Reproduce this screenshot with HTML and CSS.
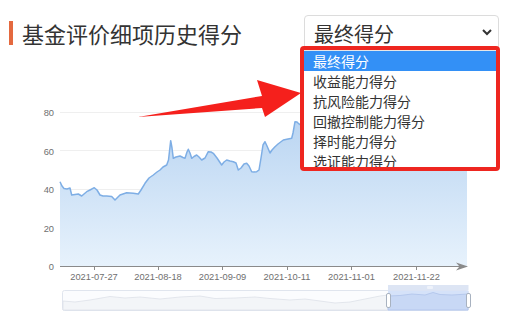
FILE: index.html
```html
<!DOCTYPE html>
<html lang="zh">
<head>
  <meta charset="UTF-8">
  <title>基金评价细项历史得分</title>
  <link rel="stylesheet" href="styles.css">
</head>
<body>
  <div class="page">
    <div class="head">
      <h2 class="title">基金评价细项历史得分</h2>
      <div class="select">
        <span>最终得分</span>
        <svg class="chevron" width="10" height="7" viewBox="0 0 10 7"><path d="M1 1 L5 5 L9 1" fill="none" stroke="#333" stroke-width="2"/></svg>
      </div>
    </div>

    <svg class="chart" width="513" height="266" viewBox="0 60 513 266">
      <defs>
        <linearGradient id="fill" gradientUnits="userSpaceOnUse" x1="0" y1="120" x2="0" y2="266">
          <stop offset="0" stop-color="#bad5f2"/>
          <stop offset="1" stop-color="#e7f2fc"/>
        </linearGradient>
      </defs>

      <!-- grid -->
      <g stroke="#efefef" stroke-width="1">
        <line x1="60" y1="112.5" x2="467" y2="112.5"/>
        <line x1="60" y1="150.5" x2="467" y2="150.5"/>
        <line x1="60" y1="189.5" x2="467" y2="189.5"/>
        <line x1="60" y1="227.5" x2="467" y2="227.5"/>
      </g>
      <g class="ylab" text-anchor="end">
        <text x="54" y="116">80</text>
        <text x="54" y="154.5">60</text>
        <text x="54" y="193">40</text>
        <text x="54" y="231.5">20</text>
        <text x="54" y="269.5">0</text>
      </g>

      <!-- series -->
      <path fill="url(#fill)" d="M60 181.7 L62 186 L64 188.5 L67 189 L70 188 L71.7 195 L75 194.5 L78.3 194 L81.7 196 L84 194 L86.7 191.7 L90 190 L94.3 187.7 L97 190 L100 195 L103 196 L106.7 196 L111.7 196.5 L115 200 L117 198 L120 195 L126.7 192.7 L133.3 193.3 L138.3 194 L141 190 L145 183.3 L149 178 L153.3 175 L157 172 L160 170 L163 167 L166.7 165 L168.5 160 L170.7 140.7 L172 148 L173.3 158.3 L176 157 L180 156 L183 157.5 L185 158.3 L187 152 L188.3 149.3 L190 153 L191.7 158.3 L194 156.5 L196.7 155 L199 157 L201.7 160 L205 158 L208.3 151.7 L211 152 L213.3 153.3 L217 158 L221.7 165 L224 162 L226.7 160 L230 161 L233.3 161.7 L236 163 L238.3 170 L241 168 L244 164 L246.7 163.3 L249 166 L251.7 171.7 L254 172 L256.7 171.7 L259 170 L261 158 L263 145 L265 141.7 L267 146 L270 153 L272 150 L275 146.7 L278 144 L283.3 140 L288 139 L291.7 138.3 L293 133 L295 121.7 L297 122 L298.3 123.3 L305 128 L315 135 L325 130 L340 140 L355 132 L370 138 L385 128 L400 134 L415 126 L430 130 L445 124 L455 128 L467 126 L467 266 L60 266 Z"/>
      <path fill="none" stroke="#7eaee5" stroke-width="1.5" stroke-linejoin="round" d="M60 181.7 L62 186 L64 188.5 L67 189 L70 188 L71.7 195 L75 194.5 L78.3 194 L81.7 196 L84 194 L86.7 191.7 L90 190 L94.3 187.7 L97 190 L100 195 L103 196 L106.7 196 L111.7 196.5 L115 200 L117 198 L120 195 L126.7 192.7 L133.3 193.3 L138.3 194 L141 190 L145 183.3 L149 178 L153.3 175 L157 172 L160 170 L163 167 L166.7 165 L168.5 160 L170.7 140.7 L172 148 L173.3 158.3 L176 157 L180 156 L183 157.5 L185 158.3 L187 152 L188.3 149.3 L190 153 L191.7 158.3 L194 156.5 L196.7 155 L199 157 L201.7 160 L205 158 L208.3 151.7 L211 152 L213.3 153.3 L217 158 L221.7 165 L224 162 L226.7 160 L230 161 L233.3 161.7 L236 163 L238.3 170 L241 168 L244 164 L246.7 163.3 L249 166 L251.7 171.7 L254 172 L256.7 171.7 L259 170 L261 158 L263 145 L265 141.7 L267 146 L270 153 L272 150 L275 146.7 L278 144 L283.3 140 L288 139 L291.7 138.3 L293 133 L295 121.7 L297 122 L298.3 123.3 L305 128 L315 135 L325 130 L340 140 L355 132 L370 138 L385 128 L400 134 L415 126 L430 130 L445 124 L455 128 L467 126"/>

      <!-- x axis -->
      <line x1="60" y1="266.5" x2="462" y2="266.5" stroke="#8a8a8a" stroke-width="1"/>
      <polygon points="468,266.5 456,262.5 459.5,266.5 456,270.5" fill="#8a8a8a"/>
      <g stroke="#8a8a8a" stroke-width="1">
        <line x1="94.5" y1="266" x2="94.5" y2="270"/>
        <line x1="158.5" y1="266" x2="158.5" y2="270"/>
        <line x1="222.5" y1="266" x2="222.5" y2="270"/>
        <line x1="287.5" y1="266" x2="287.5" y2="270"/>
        <line x1="351.5" y1="266" x2="351.5" y2="270"/>
        <line x1="416.5" y1="266" x2="416.5" y2="270"/>
      </g>
      <g class="xlab" text-anchor="middle">
        <text x="94" y="279.5">2021-07-27</text>
        <text x="158" y="279.5">2021-08-18</text>
        <text x="222.5" y="279.5">2021-09-09</text>
        <text x="287" y="279.5">2021-10-11</text>
        <text x="351.5" y="279.5">2021-11-01</text>
        <text x="416.5" y="279.5">2021-11-22</text>
      </g>

      <!-- data zoom -->
      <rect x="62.5" y="290.5" width="406" height="20" rx="2" fill="#fbfcfe" stroke="#e0e5ee"/>
      <path fill="#f3f5f8" stroke="#dde1e8" stroke-width="0.8" d="M63 301 L75 302 L90 300 L110 296.5 L125 298 L140 297 L160 299 L180 297 L200 296 L215 298.5 L235 298 L255 297 L270 298.5 L290 300 L305 299 L320 301 L335 303 L350 302 L365 299 L380 296 L388 295 L388 310 L63 310 Z"/>
      <rect x="388" y="290.5" width="80.5" height="20" fill="#d5e2f9"/>
      <path fill="#c8d8f5" stroke="#aec3ea" stroke-width="0.8" d="M388 296 L400 295.5 L412 294 L425 295 L433 292.5 L440 294.5 L452 295 L468 294 L468 310 L388 310 Z"/>
      <rect x="388" y="285" width="80.5" height="5" fill="#dde5f4"/>
      <rect x="427" y="286" width="6" height="3" rx="1" fill="#eef2fa"/>
      <rect x="386.5" y="293.5" width="4" height="14" rx="1.5" fill="#fff" stroke="#a8b2c0"/>
      <rect x="466.5" y="293.5" width="4" height="14" rx="1.5" fill="#fff" stroke="#a8b2c0"/>
    </svg>

    <svg class="arrow" width="513" height="326" viewBox="0 0 513 326">
      <polygon points="138,117 262,96 257,80 301,93 265,117 262,108" fill="#f5201c"/>
    </svg>

    <div class="dropdown">
      <ul class="options">
        <li class="active">最终得分</li>
        <li>收益能力得分</li>
        <li>抗风险能力得分</li>
        <li>回撤控制能力得分</li>
        <li>择时能力得分</li>
        <li>选证能力得分</li>
      </ul>
    </div>
  </div>
</body>
</html>
```

FILE: styles.css
```css
* { box-sizing: border-box; margin: 0; padding: 0; }
body {
  font-family: "Noto Sans CJK SC", "Liberation Sans", sans-serif;
  background: #fff;
  color: #333;
}
.page {
  position: relative;
  width: 513px;
  height: 326px;
  overflow: hidden;
}
.head {
  display: flex;
  align-items: flex-start;
  height: 60px;
}
.title {
  margin: 21px 0 0 9px;
  padding-left: 9px;
  border-left: 4px solid #e4693f;
  font-size: 22px;
  font-weight: normal;
  line-height: 24px;
  color: #333;
}
.select {
  margin: 15px 14px 0 auto;
  width: 195px;
  height: 38px;
  border: 1px solid #dcdcdc;
  border-radius: 4px;
  display: flex;
  align-items: center;
  justify-content: space-between;
  padding: 0 6px 0 9px;
  font-size: 20px;
  line-height: 34px;
  color: #333;
}
.chevron { margin-bottom: 4px; }
.chart { display: block; }
.ylab text, .xlab text {
  font-family: "Liberation Sans", sans-serif;
  font-size: 9.3px;
  fill: #6f6f6f;
}
.arrow {
  position: absolute;
  left: 0;
  top: 0;
}
.dropdown {
  position: absolute;
  left: 300px;
  top: 46px;
  width: 200px;
  height: 125px;
  border: 4px solid #ee2620;
  border-radius: 4px;
  background: #fff;
  overflow: hidden;
}
.options {
  list-style: none;
  border-top: 1px solid #e6e6e6;
}
.options li {
  height: 20px;
  line-height: 20px;
  font-size: 14px;
  padding-left: 9px;
  color: #333;
  white-space: nowrap;
}
.options li.active {
  background: #3390f6;
  color: #fff;
}
```
